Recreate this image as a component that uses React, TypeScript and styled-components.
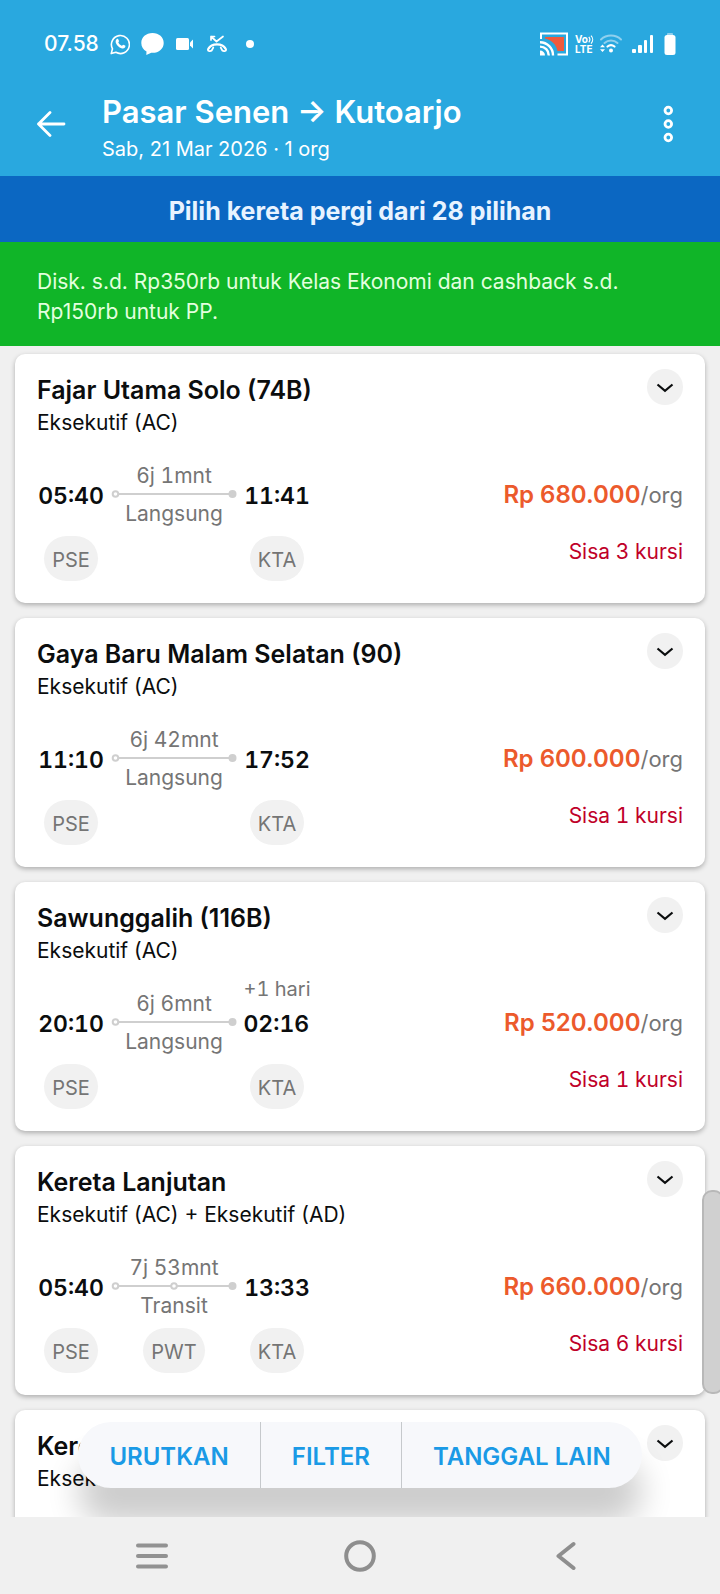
import React from 'react';
import styled, { createGlobalStyle } from 'styled-components';

const color = {
  sky: '#29a8df',
  blue: '#0b67c2',
  green: '#10b528',
  page: '#f0f0f0',
  ink: '#0b0d0e',
  grey: '#757575',
  chip: '#f1f1f1',
  line: '#cfcfcf',
  orange: '#ec5a2c',
  red: '#bf0029',
  link: '#1a9ae6',
};

const GlobalStyle = createGlobalStyle`
  *, *::before, *::after { box-sizing: border-box; }
  html { background: ${color.page}; }
  body {
    margin: 0;
    font-family: Inter, Roboto, sans-serif;
    color: ${color.ink};
  }
  button {
    margin: 0;
    padding: 0;
    border: 0;
    background: none;
    font: inherit;
    color: inherit;
    cursor: pointer;
  }
  h1, h2, p, ul { margin: 0; padding: 0; font: inherit; }
  svg { display: block; flex: none; }
`;

const Screen = styled.div`
  display: flex;
  flex-direction: column;
  height: 100vh;
  background: ${color.page};
`;

const Header = styled.header`
  flex: none;
  background: ${color.sky};
  color: #fff;
`;

const StatusBar = styled.div`
  display: flex;
  justify-content: space-between;
  align-items: center;
  height: 88px;
  padding: 0 44px;
`;

const StatusGroup = styled.div<{ $gap: number }>`
  display: flex;
  align-items: center;
  gap: ${(p) => p.$gap}px;
`;

const Clock = styled.span`
  font-size: 21px;
  font-weight: 500;
  line-height: 24px;
`;

const Volte = styled.span`
  display: flex;
  flex-direction: column;
  width: 18px;
  font-size: 10px;
  font-weight: 700;
  line-height: 10px;
`;

const VolteTop = styled.span`
  display: flex;
  align-items: center;
`;

const AppBar = styled.div`
  display: flex;
  align-items: flex-start;
  padding: 4px 36px 10px;
`;

const BarButton = styled.button<{ $align: 'flex-start' | 'flex-end' }>`
  display: flex;
  align-items: center;
  justify-content: ${(p) => p.$align};
  width: 48px;
  height: 64px;
`;

const Heading = styled.div`
  flex: 1;
  padding-left: 18px;
`;

const Title = styled.h1`
  font-size: 31px;
  font-weight: 600;
  line-height: 40px;
`;

const Subtitle = styled.p`
  font-size: 20px;
  line-height: 34px;
`;

const CountBanner = styled.p`
  flex: none;
  padding: 19px 24px 15px;
  background: ${color.blue};
  color: #e8f3ff;
  font-size: 25px;
  font-weight: 700;
  line-height: 32px;
  text-align: center;
`;

const PromoBanner = styled.p`
  flex: none;
  background: ${color.green};
  color: #e3ffdf;
  font-size: 21px;
  line-height: 30px;
  padding: 25px 37px 19px;
`;

const Content = styled.main`
  position: relative;
  flex: 1;
  min-height: 0;
  overflow: hidden;
`;

const List = styled.ul`
  display: flex;
  flex-direction: column;
  gap: 15px;
  height: 100%;
  padding: 8px 15px;
  overflow-y: auto;
  list-style: none;
  scrollbar-width: none;
`;

const Card = styled.li`
  flex: none;
  min-height: 249px;
  padding: 15px 22px 22px;
  border-radius: 10px;
  background: #fff;
  box-shadow: 0 2px 5px rgba(0, 0, 0, 0.28);
`;

const CardHead = styled.div`
  display: flex;
  justify-content: space-between;
  align-items: flex-start;
`;

const CardNames = styled.div`
  padding-top: 6px;
`;

const TrainName = styled.h2`
  font-size: 25px;
  font-weight: 600;
  line-height: 30px;
`;

const TrainClass = styled.p`
  font-size: 21px;
  line-height: 36px;
`;

const Expand = styled.button`
  display: flex;
  align-items: center;
  justify-content: center;
  width: 36px;
  height: 36px;
  border-radius: 50%;
  background: ${color.chip};
`;

const CardBody = styled.div`
  display: flex;
  justify-content: space-between;
  padding-top: 7px;
  font-variant-numeric: tabular-nums;
`;

const Trip = styled.div`
  display: grid;
  grid-template-columns: 68px 138px 68px;
  grid-template-rows: 80px 45px;
  row-gap: 8px;
  justify-items: center;
`;

const Stop = styled.div`
  display: flex;
  flex-direction: column;
  align-self: end;
  padding-bottom: 17px;
  gap: 8px;
`;

const DayShift = styled.span`
  font-size: 20px;
  line-height: 24px;
  color: ${color.grey};
  white-space: nowrap;
`;

const Time = styled.time`
  font-size: 23px;
  font-weight: 600;
  line-height: 30px;
`;

const Route = styled.div`
  display: flex;
  flex-direction: column;
  align-items: center;
  align-self: end;
  font-size: 21px;
  color: ${color.grey};
`;

const Duration = styled.span`
  line-height: 24px;
`;

const Directness = styled.span`
  line-height: 28px;
`;

const Code = styled.span<{ $column: number }>`
  grid-column: ${(p) => p.$column};
  grid-row: 2;
  padding: 3px 8px 0;
  border-radius: 23px;
  background: ${color.chip};
  color: ${color.grey};
  font-size: 20px;
  line-height: 42px;
`;

const Fare = styled.div`
  display: flex;
  flex-direction: column;
  align-items: flex-end;
  gap: 30px;
  padding-top: 32px;
`;

const Price = styled.p`
  font-size: 22px;
  line-height: 30px;
  color: ${color.grey};
`;

const Amount = styled.strong`
  font-size: 24px;
  font-weight: 600;
  font-variant-numeric: normal;
  color: ${color.orange};
`;

const SeatsLeft = styled.p`
  font-size: 21px;
  line-height: 24px;
  color: ${color.red};
`;

const ScrollThumb = styled.div`
  position: absolute;
  right: -4px;
  bottom: 123px;
  width: 22px;
  height: 204px;
  border: 2px solid #b8b8b8;
  border-radius: 10px;
  background: #d0d0d0;
`;

const ActionDock = styled.div`
  position: absolute;
  left: 0;
  right: 0;
  bottom: 29px;
  display: flex;
  justify-content: center;
  pointer-events: none;
`;

const ActionPill = styled.div`
  display: flex;
  border-radius: 33px;
  background: #f7f8fb;
  box-shadow: 0 36px 32px rgba(0, 0, 0, 0.2);
  pointer-events: auto;
`;

const Action = styled.button`
  padding: 4px 31px 0;
  font-size: 24px;
  font-weight: 600;
  line-height: 62px;
  color: ${color.link};

  & + & {
    border-left: 1px solid #c6c9cc;
  }
`;

const SystemNav = styled.nav`
  flex: none;
  display: grid;
  grid-template-columns: repeat(3, 1fr);
  height: 77px;
  padding: 0 48px;
  background: ${color.page};
`;

const NavButton = styled.button`
  display: flex;
  align-items: center;
  justify-content: center;
`;

const StatusIcons = () => (
  <>
    <svg width="20" height="22" viewBox="0 0 20 22" fill="none" stroke="#fff">
      <path d="M1.2 20.6 2.5 15.8A9 9 0 1 1 5.9 19.3Z" strokeWidth="1.6" strokeLinejoin="round" />
      <path
        d="M6.6 6.2c.5-.6 1.300-.6 1.600 0l.8 1.900c.1.500-.7 1.100-.7 1.500.8 1.500 1.800 2.500 3.400 3.200.5.1 1-.9 1.500-1.100l1.900.9c.5.300.3 1.400-.1 1.900-.9 1-2.300 1.200-3.600.7-2.500-.9-4.300-2.700-5.400-5-.6-1.400-.4-3 .6-4Z"
        fill="#fff"
        stroke="none"
      />
    </svg>
    <svg width="23" height="22" viewBox="0 0 23 22" fill="#fff">
      <path d="M11.500 0C5 0 .3 4.300.3 9.900c0 3.700 2 6.800 5.200 8.500L5.300 22l5-2.200h1.200c6.500 0 11.200-4.300 11.200-9.900S18 0 11.500 0Z" />
    </svg>
    <svg width="20" height="14" viewBox="0 0 20 14" fill="#fff">
      <rect x="1" y="1" width="13" height="12" rx="1.500" />
      <path d="M15 5.500 18 2.500v9L15 8.500Z" />
    </svg>
    <svg width="22" height="18" viewBox="0 0 22 18" fill="none" stroke="#fff" strokeLinecap="round" strokeLinejoin="round">
      <path d="M5 5V1.500h3.500M5 1.500l5.500 5L17 1.500" strokeWidth="1.700" />
      <path d="M2.500 13.500c3-5.500 14-5.500 17 0" strokeWidth="2.200" />
      <path d="M4 11.800 1.800 14.700c0 1.500 2.700 1.800 3.900.8l1.600-3M18 11.800l2.200 2.900c0 1.500-2.700 1.800-3.900.8l-1.600-3" strokeWidth="1.700" />
    </svg>
    <svg width="20" height="8" viewBox="0 0 20 8">
      <circle cx="11" cy="4" r="4" fill="#fff" />
    </svg>
  </>
);

const CastIcon = () => (
  <svg width="28" height="24" viewBox="0 0 28 24" fill="none" stroke="#fff">
    <path d="M5 5h19v14h-6.500C16 12 12 8.500 5 6.500Z" fill="#f05a3c" stroke="none" />
    <path d="M1 7V1.500h26v21H17.500" strokeWidth="2" />
    <path d="M0 10.200A13 13 0 0 1 13 23.500M0 14.600A8.800 8.800 0 0 1 8.800 23.500" strokeWidth="2.400" />
    <path d="M0 18.500v5h5A5 5 0 0 0 0 18.500Z" fill="#fff" stroke="none" />
  </svg>
);

const WifiIcon = () => (
  <svg width="22" height="20" viewBox="0 0 22 20" fill="none" strokeLinecap="round">
    <path d="M1 5.500C6.500.3 15.500.3 21 5.500" stroke="#8fd0ee" strokeWidth="2" />
    <path d="M4.500 9c3.700-3.500 9.300-3.500 13 0" stroke="#8fd0ee" strokeWidth="2" />
    <path d="M7.500 12.500c2.200-1.800 4.800-1.800 7 0" stroke="#fff" strokeWidth="2.200" />
    <circle cx="11" cy="16.500" r="2" fill="#fff" />
    <path d="M0 13.300 2.500 10.500 5 13.300ZM0 15.200 2.500 18 5 15.200Z" fill="#fff" />
  </svg>
);

const SignalIcon = () => (
  <svg width="28" height="20" viewBox="0 0 28 20" fill="#fff">
    <rect x="3" y="15" width="4" height="4" rx="1" />
    <rect x="9" y="11" width="4" height="8" rx="1" />
    <rect x="15" y="6" width="3" height="13" rx="1" />
    <rect x="21" y="1" width="3" height="18" rx="1" />
  </svg>
);

const BatteryIcon = () => (
  <svg width="12" height="22" viewBox="0 0 12 22">
    <rect x="3" y="0" width="6" height="3" rx="1" fill="#8fd0ee" />
    <rect x="0.500" y="2" width="11" height="20" rx="2.500" fill="#fff" />
  </svg>
);

const RouteLine = ({ transit }: { transit?: boolean }) => (
  <svg width="126" height="12" viewBox="0 0 126 12" fill="#fff" stroke={color.line} strokeWidth="2">
    <path d="M4 6h116" />
    <circle cx="4.500" cy="6" r="2.800" />
    {transit && <circle cx="63" cy="6" r="2.800" />}
    <circle cx="121.500" cy="6" r="3" fill={color.line} />
  </svg>
);

type Train = {
  name: string;
  cls: string;
  trip?: {
    depart: string;
    arrive: string;
    duration: string;
    via?: string;
    dayShift?: string;
    price: string;
    seats: number;
  };
};

const trains: Train[] = [
  {
    name: 'Fajar Utama Solo (74B)',
    cls: 'Eksekutif (AC)',
    trip: { depart: '05:40', arrive: '11:41', duration: '6j 1mnt', price: 'Rp 680.000', seats: 3 },
  },
  {
    name: 'Gaya Baru Malam Selatan (90)',
    cls: 'Eksekutif (AC)',
    trip: { depart: '11:10', arrive: '17:52', duration: '6j 42mnt', price: 'Rp 600.000', seats: 1 },
  },
  {
    name: 'Sawunggalih (116B)',
    cls: 'Eksekutif (AC)',
    trip: { depart: '20:10', arrive: '02:16', duration: '6j 6mnt', dayShift: '+1 hari', price: 'Rp 520.000', seats: 1 },
  },
  {
    name: 'Kereta Lanjutan',
    cls: 'Eksekutif (AC) + Eksekutif (AD)',
    trip: { depart: '05:40', arrive: '13:33', duration: '7j 53mnt', via: 'PWT', price: 'Rp 660.000', seats: 6 },
  },
  { name: 'Kereta Lanjutan', cls: 'Eksekutif (AC) + Eksekutif (AD)' },
];

const TrainCard = ({ name, cls, trip }: Train) => (
  <Card>
    <CardHead>
      <CardNames>
        <TrainName>{name}</TrainName>
        <TrainClass>{cls}</TrainClass>
      </CardNames>
      <Expand aria-label={`Detail ${name}`}>
        <svg width="18" height="12" viewBox="0 0 18 12" fill="none" stroke={color.ink} strokeWidth="2.200">
          <path d="M1.500 3.500 9 9.800l7.500-6.300" />
        </svg>
      </Expand>
    </CardHead>
    {trip && (
      <CardBody>
        <Trip>
          <Stop>
            <Time>{trip.depart}</Time>
          </Stop>
          <Route>
            <Duration>{trip.duration}</Duration>
            <RouteLine transit={!!trip.via} />
            <Directness>{trip.via ? 'Transit' : 'Langsung'}</Directness>
          </Route>
          <Stop>
            {trip.dayShift && <DayShift>{trip.dayShift}</DayShift>}
            <Time>{trip.arrive}</Time>
          </Stop>
          <Code $column={1}>PSE</Code>
          {trip.via && <Code $column={2}>{trip.via}</Code>}
          <Code $column={3}>KTA</Code>
        </Trip>
        <Fare>
          <Price>
            <Amount>{trip.price}</Amount>/org
          </Price>
          <SeatsLeft>Sisa {trip.seats} kursi</SeatsLeft>
        </Fare>
      </CardBody>
    )}
  </Card>
);

export default function App() {
  return (
    <Screen>
      <GlobalStyle />
      <Header>
        <StatusBar>
          <StatusGroup $gap={11}>
            <Clock>07.58</Clock>
            <StatusIcons />
          </StatusGroup>
          <StatusGroup $gap={7}>
            <CastIcon />
            <Volte>
              <VolteTop>
                Vo
                <svg width="6" height="9" viewBox="0 0 6 9" fill="none" stroke="#fff" strokeWidth="1.200">
                  <path d="M.8 1.800c1.200 1.500 1.200 4 0 5.500M3 .6c2.200 2.300 2.200 5.700 0 8" />
                </svg>
              </VolteTop>
              LTE
            </Volte>
            <WifiIcon />
            <SignalIcon />
            <BatteryIcon />
          </StatusGroup>
        </StatusBar>
        <AppBar>
          <BarButton $align="flex-start" aria-label="Kembali">
            <svg width="30" height="26" viewBox="0 0 30 26" fill="none" stroke="#fff" strokeWidth="2.800" strokeLinecap="round" strokeLinejoin="round">
              <path d="M28 13H2.500M14 1.500 2.500 13 14 24.500" />
            </svg>
          </BarButton>
          <Heading>
            <Title>Pasar Senen → Kutoarjo</Title>
            <Subtitle>Sab, 21 Mar 2026 · 1 org</Subtitle>
          </Heading>
          <BarButton $align="flex-end" aria-label="Menu">
            <svg width="32" height="38" viewBox="0 0 32 38" fill="none" stroke="#fff" strokeWidth="2.800">
              <circle cx="16.300" cy="5.500" r="3.300" />
              <circle cx="16.300" cy="19" r="3.300" />
              <circle cx="16.300" cy="32.500" r="3.300" />
            </svg>
          </BarButton>
        </AppBar>
      </Header>
      <CountBanner>Pilih kereta pergi dari 28 pilihan</CountBanner>
      <PromoBanner>Disk. s.d. Rp350rb untuk Kelas Ekonomi dan cashback s.d. Rp150rb untuk PP.</PromoBanner>
      <Content>
        <List>
          {trains.map((t, i) => (
            <TrainCard key={i} {...t} />
          ))}
        </List>
        <ScrollThumb />
        <ActionDock>
          <ActionPill>
            <Action>URUTKAN</Action>
            <Action>FILTER</Action>
            <Action>TANGGAL LAIN</Action>
          </ActionPill>
        </ActionDock>
      </Content>
      <SystemNav>
        <NavButton aria-label="Aplikasi terbaru">
          <svg width="32" height="26" viewBox="0 0 32 26" fill="#929292">
            <rect y="0.500" width="32" height="4" rx="2" />
            <rect y="11" width="32" height="4" rx="2" />
            <rect y="21.500" width="32" height="4" rx="2" />
          </svg>
        </NavButton>
        <NavButton aria-label="Beranda">
          <svg width="32" height="32" viewBox="0 0 32 32" fill="none" stroke="#8e8e8e" strokeWidth="4">
            <circle cx="16" cy="16" r="13.800" />
          </svg>
        </NavButton>
        <NavButton aria-label="Kembali">
          <svg width="24" height="30" viewBox="0 0 24 30" fill="none" stroke="#8e8e8e" strokeWidth="4" strokeLinecap="round" strokeLinejoin="round">
            <path d="M17.500 3 2.500 15l15 12" />
          </svg>
        </NavButton>
      </SystemNav>
    </Screen>
  );
}
